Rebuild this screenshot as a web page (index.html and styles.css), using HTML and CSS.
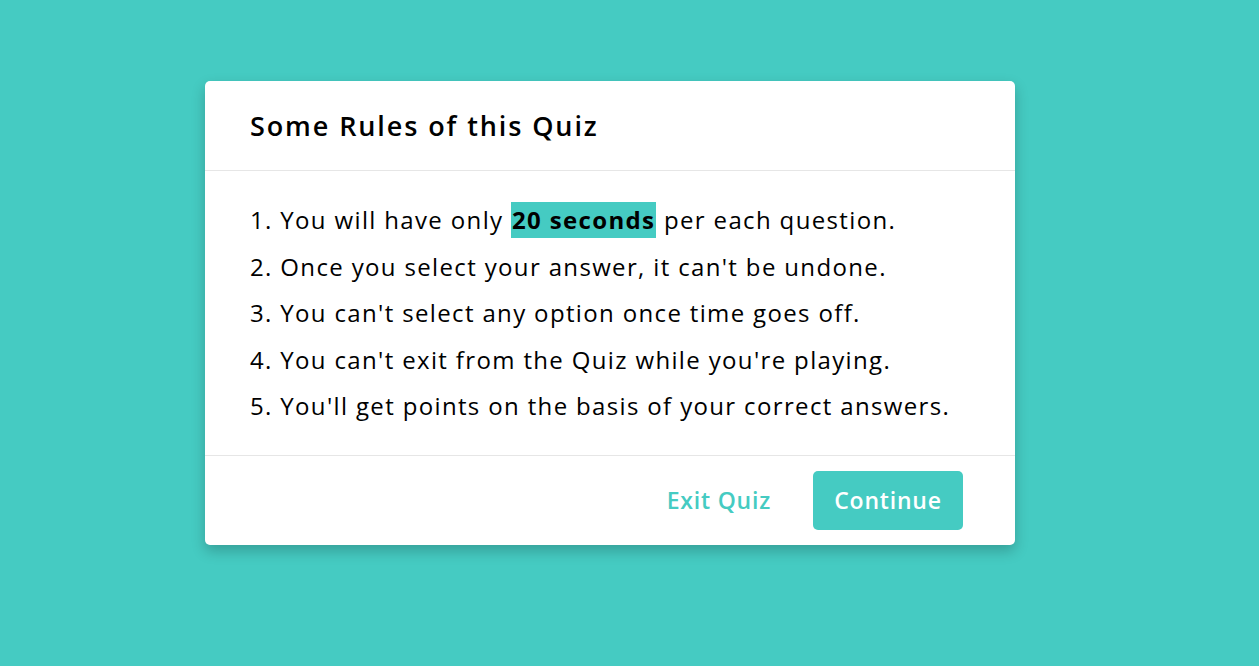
FILE: index.html
```html
<!DOCTYPE html>
<html>
<head>
<meta charset="utf-8">
<link rel="stylesheet" href="styles.css">
</head>
<body>
<div class="page">
  <div class="info-box">
    <div class="info-title">Some Rules of this Quiz</div>
    <div class="info-list">
      <div class="info">1. You will have only <span class="hl">20 seconds</span> per each question.</div>
      <div class="info">2. Once you select your answer, it can't be undone.</div>
      <div class="info">3. You can't select any option once time goes off.</div>
      <div class="info">4. You can't exit from the Quiz while you're playing.</div>
      <div class="info">5. You'll get points on the basis of your correct answers.</div>
    </div>
    <div class="buttons">
      <button class="quit">Exit Quiz</button>
      <button class="restart">Continue</button>
    </div>
  </div>
</div>
</body>
</html>
```

FILE: styles.css
```css
* { box-sizing: border-box; }
html, body { margin: 0; padding: 0; }
body {
  background: #45cbc2;
  font-family: "Open Sans", "Liberation Sans", sans-serif;
  color: #000;
}
.page {
  height: 666px;
  padding-top: 81px;
  padding-left: 205px;
}
.info-box {
  width: 810px;
  background: #fff;
  border-radius: 5px;
  box-shadow: 0 6px 14px rgba(0, 0, 0, 0.22);
}
.info-title {
  height: 90px;
  display: flex;
  align-items: center;
  padding-left: 45px;
  font-size: 27px;
  font-weight: 600;
  letter-spacing: 1.9px;
  border-bottom: 1px solid #e6e6e6;
}
.info-list {
  padding: 26px 45px 25px;
}
.info {
  font-size: 24px;
  letter-spacing: 1.35px;
  line-height: 46.5px;
  height: 46.5px;
  display: flex;
  align-items: center;
  white-space: pre;
}
.hl {
  background: #45cbc2;
  font-weight: 700;
  line-height: 36px;
  display: inline-block;
  padding: 0 1px;
}
.buttons {
  height: 90px;
  border-top: 1px solid #e6e6e6;
  display: flex;
  align-items: center;
  justify-content: flex-end;
  padding-right: 52px;
  gap: 42px;
}
button {
  font-family: inherit;
  font-size: 23px;
  font-weight: 600;
  letter-spacing: 0.8px;
  border: none;
  cursor: pointer;
}
.quit {
  background: none;
  color: #45cbc2;
  padding: 0;
}
.restart {
  background: #45cbc2;
  color: #fff;
  width: 150px;
  height: 59px;
  border-radius: 5px;
}
```
